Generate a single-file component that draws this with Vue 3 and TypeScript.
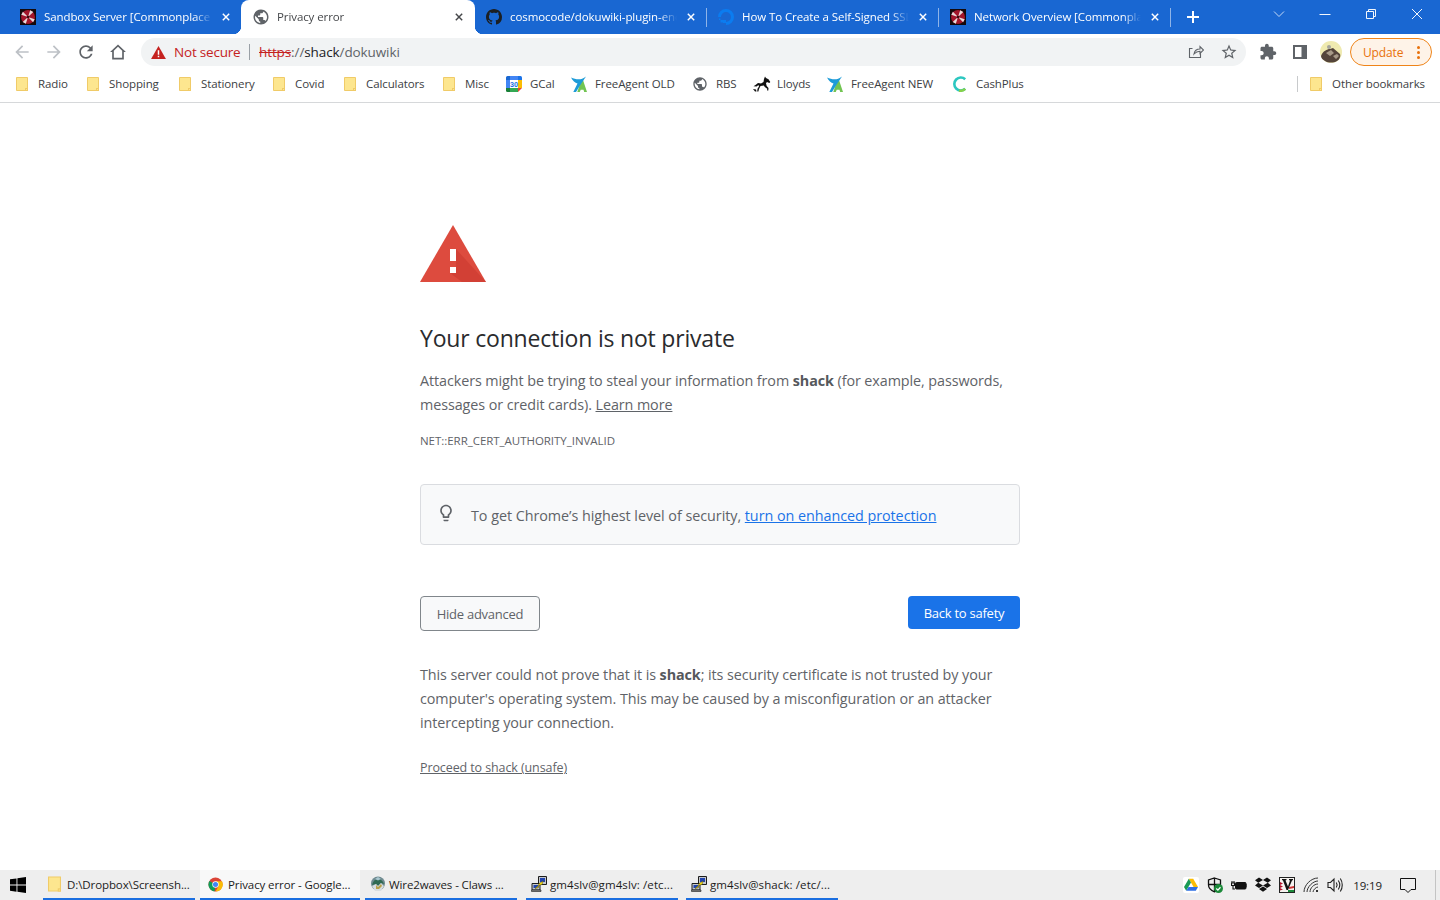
<script setup lang="ts">
interface Tab { title: string; icon: string; cls: string }
interface Mark { label: string; icon: string; width: number }
interface Task { label: string; icon: string; active?: boolean }

const tabs: Tab[] = [
  { title: 'Sandbox Server [Commonplace Books]', icon: 'umbrella', cls: 'first' },
  { title: 'Privacy error', icon: 'globe', cls: 'active' },
  { title: 'cosmocode/dokuwiki-plugin-encrypted', icon: 'github', cls: 'sep' },
  { title: 'How To Create a Self-Signed SSL Certificate', icon: 'ocean', cls: 'sep' },
  { title: 'Network Overview [Commonplace Books]', icon: 'umbrella', cls: 'sep' }
]

const marks: Mark[] = [
  { label: 'Radio', icon: 'folder', width: 71 },
  { label: 'Shopping', icon: 'folder', width: 92 },
  { label: 'Stationery', icon: 'folder', width: 94 },
  { label: 'Covid', icon: 'folder', width: 71 },
  { label: 'Calculators', icon: 'folder', width: 99 },
  { label: 'Misc', icon: 'folder', width: 63 },
  { label: 'GCal', icon: 'gcal', width: 65 },
  { label: 'FreeAgent OLD', icon: 'freeagent', width: 121 },
  { label: 'RBS', icon: 'globe', width: 61 },
  { label: 'Lloyds', icon: 'horse', width: 74 },
  { label: 'FreeAgent NEW', icon: 'freeagent', width: 125 },
  { label: 'CashPlus', icon: 'cash', width: 90 }
]

const tasks: Task[] = [
  { label: 'D:\\Dropbox\\Screensh...', icon: 'folder' },
  { label: 'Privacy error - Google...', icon: 'chrome', active: true },
  { label: 'Wire2waves - Claws ...', icon: 'claws' },
  { label: 'gm4slv@gm4slv: /etc...', icon: 'putty' },
  { label: 'gm4slv@shack: /etc/...', icon: 'putty' }
]
</script>

<template>
  <div class="screen">
    <svg class="defs" width="0" height="0" aria-hidden="true">
      <defs>
        <symbol id="umbrella" viewBox="0 0 16 16">
          <rect width="16" height="16" fill="#14090b" />
          <circle cx="8" cy="8" r="7" fill="#a3162b" />
          <path d="M8 8 10.200 1.300l3.100 1.600zM8 8l6.700 2.200-1.600 3.100zM8 8l-2.200 6.700-3.100-1.600zM8 8 1.300 5.800l1.600-3.100z" fill="#ead9da" />
          <circle cx="8" cy="8" r="1.300" fill="#3a0a10" />
        </symbol>
        <symbol id="folder" viewBox="0 0 12 14">
          <path d="M.5.5h11v13H.5z" fill="#fde68f" stroke="#f0cb68" />
          <path d="M9 11h3v3H9z" fill="#f0cb68" />
          <path d="M10 12h1v1h-1z" fill="#fde68f" />
        </symbol>
        <symbol id="globe" viewBox="0 0 24 24">
          <path fill="#5f6368" d="M12 2C6.480 2 2 6.480 2 12s4.480 10 10 10 10-4.480 10-10S17.520 2 12 2zm-1 17.930c-3.950-.49-7-3.850-7-7.930 0-.62.08-1.210.21-1.790L9 15v1c0 1.100.9 2 2 2v1.930zm6.900-2.540c-.26-.81-1-1.390-1.900-1.390h-1v-3c0-.55-.45-1-1-1H8v-2h2c.55 0 1-.45 1-1V7h2c1.100 0 2-.9 2-2v-.41c2.930 1.190 5 4.060 5 7.410 0 2.080-.8 3.970-2.100 5.390z" />
        </symbol>
        <symbol id="github" viewBox="0 0 16 16">
          <path fill="#1b1f23" d="M8 0C3.580 0 0 3.580 0 8c0 3.540 2.290 6.530 5.470 7.590.4.07.55-.17.55-.38 0-.19-.01-.82-.01-1.490-2.010.37-2.530-.49-2.690-.94-.09-.23-.48-.94-.82-1.130-.28-.15-.68-.52-.01-.53.63-.01 1.080.58 1.230.82.72 1.210 1.870.87 2.330.66.07-.52.28-.87.51-1.070-1.780-.2-3.640-.89-3.640-3.950 0-.87.31-1.590.82-2.150-.08-.2-.36-1.020.08-2.120 0 0 .67-.21 2.200.82.64-.18 1.320-.27 2-.27.68 0 1.360.09 2 .27 1.530-1.040 2.200-.82 2.200-.82.44 1.100.16 1.920.08 2.120.51.56.82 1.270.82 2.150 0 3.070-1.870 3.750-3.650 3.950.29.25.54.73.54 1.480 0 1.070-.01 1.930-.01 2.200 0 .21.15.46.55.38A8.013 8.013 0 0 0 16 8c0-4.420-3.580-8-8-8z" />
        </symbol>
        <symbol id="ocean" viewBox="0 0 16 16">
          <path fill="none" stroke="#0b7cf0" stroke-width="3" d="M8 14.500A6.500 6.500 0 1 0 1.500 8" />
          <path fill="#0b7cf0" d="M5 11h3v3H5zM2.500 11H5v2.500H2.500zM1 9.500h1.500V11H1z" />
        </symbol>
        <symbol id="gcal" viewBox="0 0 16 16">
          <rect width="16" height="16" rx="1.500" fill="#fff" />
          <path d="M0 4V1.500A1.500 1.500 0 0 1 1.500 0H4v4z" fill="#1967d2" />
          <path d="M4 0h8v4H4z" fill="#4285f4" />
          <path d="M12 0h2.500A1.500 1.500 0 0 1 16 1.500V4h-4z" fill="#1a73e8" />
          <path d="M0 4h4v8H0z" fill="#4285f4" />
          <path d="M12 4h4v8h-4z" fill="#fbbc04" />
          <path d="M0 12h4v4H1.500A1.500 1.500 0 0 1 0 14.500z" fill="#188038" />
          <path d="M4 12h8v4H4z" fill="#34a853" />
          <path d="M12 12h4l-4 4z" fill="#ea4335" />
          <text x="8" y="10.800" text-anchor="middle" class="gcal-num">30</text>
        </symbol>
        <symbol id="freeagent" viewBox="0 0 16 16">
          <path d="M8.500 9.500 11.500 2.500 16 16h-2.800l-.7-2.300H9.700L8.800 16H6.300z" fill="#72c452" />
          <path d="M0 1.500C2.500 2.700 5 3.300 7.500 3.300 10 3.300 12.500 2.500 15 .5c-1.800 3-3.500 5.200-5 7.500l-5 8H2.300L6.500 7.500C4 6.800 1.700 4.800 0 1.500z" fill="#1d9bd8" />
        </symbol>
        <symbol id="horse" viewBox="0 0 18 16">
          <path fill="#111" d="M12 .5l1 1.500 2.500 1.300 1.800 2.700-1 1-2.300-1-1 1.300.7 2.700 1.800 2-.2 2.500h-1.200l.1-1.800-2.400-1.700-1-1.500-3.300.6L6 13l-.6 2.500H4.200l.3-2.800L6 10.500l-.5-1.500-2 1.500-3-.3L2.500 9 5 7l3 .5L10.500 6l.5-3z" />
          <path fill="#111" d="M0 13l3 .5.500 2H2z" />
        </symbol>
        <symbol id="cash" viewBox="0 0 16 16">
          <path d="M13.200 3.200A6.500 6.500 0 1 0 13.200 12.800" fill="none" stroke="#2cc7c0" stroke-width="2.600" />
          <path d="M13.200 12.800A6.500 6.500 0 0 1 7 14.500" fill="none" stroke="#86d14a" stroke-width="2.600" />
        </symbol>
        <symbol id="chrome" viewBox="0 0 16 16">
          <circle cx="8" cy="8" r="7.500" fill="#db4437" />
          <path d="M8 8 1.500 4.250A7.500 7.500 0 0 0 7 15.430z" fill="#0f9d58" />
          <path d="M8 4.500h6.930A7.500 7.500 0 0 1 8 15.500L11 10z" fill="#fbbc05" />
          <circle cx="8" cy="8" r="3.400" fill="#fff" />
          <circle cx="8" cy="8" r="2.700" fill="#4285f4" />
        </symbol>
        <symbol id="claws" viewBox="0 0 16 16">
          <circle cx="8" cy="7.500" r="7" fill="#6f8a90" />
          <path d="M2 9c1-4 3-6 6-6s5 2 6 5l-3-1-3 3-2-2z" fill="#2f6a52" />
          <path d="M5 3l3-2 3 2-3 1.500z" fill="#a9c6cf" />
          <path d="M2 10l4-2 2 2 3-3 3 3-3 5H5z" fill="#d8dde0" />
          <path d="M6 9l2 2 3-3 1 2-3 3H6z" fill="#b9a14a" />
        </symbol>
        <symbol id="putty" viewBox="0 0 16 16">
          <path d="M7.500.5h8v8h-8z" fill="#c4c7cc" stroke="#1c1c1c" />
          <path d="M9 2h5v4H9z" fill="#2144b0" />
          <path d="M1 7.500h8v6.500H1z" fill="#c4c7cc" stroke="#1c1c1c" />
          <path d="M2.500 9h5v3h-5z" fill="#2144b0" />
          <path d="M.5 14h9.500v1.500H.5z" fill="#8d8d8d" stroke="#1c1c1c" stroke-width=".6" />
          <path d="M4 12.500 7 10l1.200-2.500 4-2.500-1.200 3.500-3 .8-1 2.500z" fill="#ffe11a" stroke="#5b5200" stroke-width=".5" />
        </symbol>
      </defs>
    </svg>

    <header class="tabstrip">
      <div v-for="tab in tabs" :key="tab.title" class="tab" :class="tab.cls">
        <svg class="favicon" :class="{ small: tab.icon === 'globe' }"><use :href="`#${tab.icon}`" /></svg>
        <span class="tab-title">{{ tab.title }}</span>
        <svg class="tab-close" viewBox="0 0 10 10"><path d="M1 1l8 8M9 1l-8 8" /></svg>
      </div>
      <svg class="new-tab" viewBox="0 0 12 12"><path d="M6 0v12M0 6h12" /></svg>
      <div class="spacer"></div>
      <svg class="win chevron" viewBox="0 0 12 12"><path d="M1 3.500l5 5 5-5" /></svg>
      <svg class="win" viewBox="0 0 12 12"><path d="M.5 6.500h11" /></svg>
      <svg class="win" viewBox="0 0 12 12"><path d="M1.500 3.500h7v7h-7zM3.500 3.500v-2h7v7h-2" /></svg>
      <svg class="win" viewBox="0 0 12 12"><path d="M1 1l10 10M11 1 1 11" /></svg>
    </header>

    <div class="toolbar">
      <svg class="tool dim" viewBox="0 0 24 24"><path d="M20 11H7.830l5.590-5.590L12 4l-8 8 8 8 1.410-1.410L7.830 13H20v-2z" /></svg>
      <svg class="tool dim" viewBox="0 0 24 24"><path d="M12 4l-1.410 1.410L16.170 11H4v2h12.170l-5.580 5.590L12 20l8-8z" /></svg>
      <svg class="tool" viewBox="0 0 24 24"><path d="M17.650 6.350C16.200 4.900 14.210 4 12 4c-4.420 0-7.990 3.580-7.990 8s3.570 8 7.990 8c3.730 0 6.840-2.550 7.730-6h-2.080c-.82 2.330-3.040 4-5.650 4-3.310 0-6-2.690-6-6s2.690-6 6-6c1.660 0 3.140.69 4.220 1.780L13 11h7V4l-2.350 2.350z" /></svg>
      <svg class="tool" viewBox="0 0 24 24"><path d="M12 3 2.500 12H5v9h14v-9h2.500L12 3zm0 2.800 5 4.700V19H7v-8.500l5-4.700z" /></svg>
      <div class="omnibox">
        <svg class="warn" viewBox="0 0 16 14"><path d="M8 0l8 14H0z" fill="#c5221f" /><path d="M7.200 4.500h1.600v5H7.200zM7.200 10.500h1.600V12H7.200z" fill="#fff" /></svg>
        <span class="not-secure">Not secure</span>
        <span class="omni-sep"></span>
        <span class="url"><s class="scheme">https</s><span class="scheme-rest">://</span>shack<span class="scheme-rest">/dokuwiki</span></span>
        <div class="spacer"></div>
        <svg class="omni-icon" viewBox="0 0 16 16"><path d="M12.500 9.500v4h-11v-9h3M6 10c.5-3 3-5 6-5V2.500L15.500 6 12 9.500V7.300C9.500 7.300 7.500 8.300 6 10z" /></svg>
        <svg class="omni-star" viewBox="0 0 24 24"><path d="M22 9.240l-7.190-.62L12 2 9.190 8.630 2 9.240l5.460 4.730L5.820 21 12 17.270 18.180 21l-1.630-7.030L22 9.240zM12 15.400l-3.760 2.270 1-4.280-3.320-2.880 4.380-.38L12 6.100l1.710 4.040 4.380.38-3.320 2.880 1 4.280L12 15.400z" /></svg>
      </div>
      <svg class="puzzle" viewBox="0 0 24 24"><path d="M20.500 11H19V7c0-1.100-.9-2-2-2h-4V3.500C13 2.120 11.880 1 10.500 1S8 2.120 8 3.500V5H4c-1.100 0-1.990.9-1.990 2v3.800H3.500c1.490 0 2.700 1.210 2.700 2.700s-1.210 2.700-2.700 2.700H2V20c0 1.100.9 2 2 2h3.800v-1.500c0-1.490 1.210-2.700 2.700-2.700 1.490 0 2.700 1.210 2.700 2.700V22H17c1.100 0 2-.9 2-2v-4h1.500c1.380 0 2.500-1.120 2.500-2.500S21.880 11 20.500 11z" /></svg>
      <svg class="panel" viewBox="0 0 14 14"><path fill-rule="evenodd" d="M0 0h14v14H0zM2 2v10h6.500V2z" /></svg>
      <svg class="avatar" viewBox="0 0 22 22">
        <circle cx="11" cy="11" r="11" fill="#efeab0" />
        <path d="M1 15c2-5 6-7 9-7l3-1 7 6c1 3-1 6-3 7-3 2-9 2-12 0-2-1-4-3-4-5z" fill="#54443a" />
        <path d="M6 12l5-3 3 3-4 3zM13 15l4-2 2 2-3 3z" fill="#a89a88" />
        <circle cx="9" cy="6" r="2" fill="#a5a59c" />
      </svg>
      <div class="update">
        <span class="update-text">Update</span>
        <span class="dots"><i></i><i></i><i></i></span>
      </div>
    </div>

    <nav class="bookmarks">
      <div v-for="m in marks" :key="m.label" class="mark" :style="{ width: m.width + 'px' }">
        <svg class="mark-icon" :class="m.icon"><use :href="`#${m.icon}`" /></svg>
        <span class="mark-label">{{ m.label }}</span>
      </div>
      <div class="spacer"></div>
      <span class="mark-sep"></span>
      <div class="mark other">
        <svg class="mark-icon folder"><use href="#folder" /></svg>
        <span class="mark-label">Other bookmarks</span>
      </div>
    </nav>

    <main class="page">
      <section class="interstitial">
        <svg class="alert" viewBox="0 0 66 57">
          <path d="M33 0l33 57H0z" fill="#dd4b3e" />
          <path d="M36 24l30 33H42L30 48l6-6z" fill="#c8392d" opacity=".55" />
          <path d="M30 24h6v12h-6zM30 42h6v6h-6z" fill="#fff" />
        </svg>
        <h1>Your connection is not private</h1>
        <p class="lead">Attackers might be trying to steal your information from <strong>shack</strong> (for example, passwords, messages or credit cards). <a class="plain">Learn more</a></p>
        <p class="code">NET::ERR_CERT_AUTHORITY_INVALID</p>
        <div class="promo">
          <svg class="bulb" viewBox="0 0 24 24"><path d="M9 21c0 .55.45 1 1 1h4c.55 0 1-.45 1-1v-1H9v1zm3-19C8.140 2 5 5.140 5 9c0 2.380 1.190 4.470 3 5.740V17c0 .55.45 1 1 1h6c.55 0 1-.45 1-1v-2.260c1.810-1.270 3-3.360 3-5.740 0-3.860-3.140-7-7-7zm2.850 11.100l-.85.6V16h-4v-2.300l-.85-.6C7.800 12.160 7 10.630 7 9c0-2.760 2.240-5 5-5s5 2.240 5 5c0 1.630-.8 3.160-2.150 4.100z" /></svg>
          <span class="promo-text">To get Chrome’s highest level of security, <a class="blue">turn on enhanced protection</a></span>
        </div>
        <div class="actions">
          <button class="btn secondary" type="button">Hide advanced</button>
          <button class="btn primary" type="button">Back to safety</button>
        </div>
        <p class="details">This server could not prove that it is <strong>shack</strong>; its security certificate is not trusted by your computer's operating system. This may be caused by a misconfiguration or an attacker intercepting your connection.</p>
        <p class="proceed"><a class="plain">Proceed to shack (unsafe)</a></p>
      </section>
    </main>

    <footer class="taskbar">
      <svg class="start" viewBox="0 0 16 16"><path d="M0 2.300 6.500 1.400v6.200H0zM7.400 1.300 16 0v7.600H7.400zM0 8.500h6.500v6.200L0 13.800zM7.400 8.500H16V16l-8.600-1.200z" /></svg>
      <div v-for="t in tasks" :key="t.label" class="task" :class="{ current: t.active }">
        <svg class="task-icon" :class="t.icon"><use :href="`#${t.icon}`" /></svg>
        <span>{{ t.label }}</span>
      </div>
      <div class="spacer"></div>
      <div class="tray">
        <svg class="tray-icon" viewBox="0 0 16 16"><rect width="16" height="16" rx="2" fill="#fff" /><path d="M5.800 1.800h4.400L15 10h-4.400z" fill="#fbbc04" /><path d="M5.800 1.800 1 10l2.200 3.800L8 5.600z" fill="#1a9a55" /><path d="M5.500 10H15l-2.200 3.800H3.200z" fill="#2f6fe4" /></svg>
        <svg class="tray-icon" viewBox="0 0 16 16"><path d="M7.500 1 13.500 3v5c0 3.200-2.500 5.500-6 6.800C4 13.500 1.500 11.200 1.500 8V3zM7.500 1v13.800M1.500 7.500h12" fill="none" stroke="#111" stroke-width="1.300" /><circle cx="11.500" cy="11.500" r="4.500" fill="#1c8a3a" /><path d="M9.300 11.500l1.600 1.600 2.600-2.900" fill="none" stroke="#fff" stroke-width="1.300" /></svg>
        <svg class="tray-icon" viewBox="0 0 16 16"><path d="M1 4v2M3 4v2M.5 6h3v2.500h-3zM2 8.500V12h2" fill="none" stroke="#111" stroke-width="1.100" /><rect x="4.500" y="5.500" width="10.500" height="6.500" rx="1" fill="#111" stroke="#111" /><path d="M15.500 7h.5v3h-.5z" fill="#111" /></svg>
        <svg class="tray-icon" viewBox="0 0 16 15"><path fill="#111" d="M4 0 0 2.800l3.200 2.500L8 2.600zM12 0 8 2.600l4.800 2.700L16 2.800zM3.200 5.300 0 8l4 2.600 4-2.700zM12.800 5.300 8 7.900l4 2.700L16 8zM4 11.500l4 2.800 4-2.800-4-2.600z" /></svg>
        <svg class="tray-icon" viewBox="0 0 16 16"><rect x=".5" y=".5" width="15" height="15" fill="#f6f3f0" stroke="#222" /><path d="M3 2h4.500v1L6.500 3.500 9 9.500l2-6-1-.5V2h4v1l-1 .5L9 13H7.500L4 3.500 3 3z" fill="#111" /><path d="M1 5l3 1.500-3 1.500 3 1.500-3 1.500 3 1.500-3 1z" fill="#b3122a" /><path d="M10 10l5-1v2l-5 1z" fill="#c33" /><path d="M9 13h6v2H9z" fill="#1c8a3a" /></svg>
        <svg class="tray-icon" viewBox="0 0 16 16"><path d="M1 15C1 8 8 1 15 1M4 15c0-5 6-11 11-11M7 15c0-4 4-8 8-8M10 15c0-2 3-5 5-5" fill="none" stroke="#333" stroke-width="1" /><path d="M13 13h2v2h-2z" fill="#333" /></svg>
        <svg class="tray-icon" viewBox="0 0 16 16"><path d="M1 5.500h2.500L7 2v12L3.500 10.500H1zM9.300 5.500c1 1.500 1 3.500 0 5M11.300 3.500c1.800 2.700 1.800 6.300 0 9M13.300 1.500c2.600 3.700 2.600 9.300 0 13" fill="none" stroke="#222" stroke-width="1.100" /></svg>
        <span class="clock">19:19</span>
        <svg class="notify" viewBox="0 0 16 16"><path d="M.5 1.500h15v11H11l-3 3-3-3H.5z" fill="none" stroke="#111" /></svg>
        <span class="desk-line"></span>
      </div>
    </footer>
  </div>
</template>

<style scoped>
.screen {
  width: 1440px;
  height: 900px;
  display: flex;
  flex-direction: column;
  overflow: hidden;
  background: #fff;
  font-family: "Open Sans", "Noto Sans", sans-serif;
  color: #202124;
}
.defs { position: absolute; }
.gcal-num { font: 700 7px "Roboto", sans-serif; fill: #1a73e8; }
.spacer { flex: 1; }

/* tab strip */
.tabstrip {
  height: 34px;
  flex: none;
  display: flex;
  align-items: center;
  padding-left: 10px;
  background: #1967d2;
  color: #fff;
  font-size: 11.500px;
  letter-spacing: -.09px;
}
.tab {
  width: 232px;
  height: 34px;
  flex: none;
  box-sizing: border-box;
  display: flex;
  align-items: center;
  padding: 0 11px 0 10px;
  position: relative;
}
.tab.first { width: 231px; padding-right: 9px; }
.tab.active {
  width: 234px;
  padding: 0 10px 0 12px;
  margin-right: 1px;
  background: #fff;
  color: #45474a;
  border-radius: 8px 8px 0 0;
}
.tab.active::before,
.tab.active::after {
  content: "";
  position: absolute;
  bottom: 0;
  width: 8px;
  height: 8px;
}
.tab.active::before { left: -8px; background: radial-gradient(circle at 0 0, transparent 8px, #fff 8.500px); }
.tab.active::after { right: -8px; background: radial-gradient(circle at 100% 0, transparent 8px, #fff 8.500px); }
.tab.sep::after {
  content: "";
  position: absolute;
  right: 1px;
  top: 8px;
  height: 19px;
  width: 1px;
  background: #8fb4e8;
}
.favicon { width: 16px; height: 16px; flex: none; margin-right: 8px; }
.favicon.small { width: 18px; height: 18px; margin: 0 7px 0 -1px; }
.tab-title {
  flex: 1;
  min-width: 0;
  white-space: nowrap;
  overflow: hidden;
  line-height: 18px;
  padding-bottom: 1px;
  -webkit-mask-image: linear-gradient(to right, #000 calc(100% - 18px), transparent);
  mask-image: linear-gradient(to right, #000 calc(100% - 18px), transparent);
}
.tab-close {
  width: 8px;
  height: 8px;
  flex: none;
  margin: 0 2px 0 10px;
  fill: none;
  stroke: #fff;
  stroke-width: 1.800;
}
.tab.active .tab-close { stroke: #45474a; }
.new-tab { width: 12px; height: 12px; margin-left: 15px; fill: none; stroke: #fff; stroke-width: 2; flex: none; }
.win {
  width: 12px;
  height: 12px;
  flex: none;
  align-self: flex-start;
  margin: 8px 34px 0 0;
  fill: none;
  stroke: #fff;
  stroke-width: 1;
  opacity: .95;
}
.win:last-child { margin-right: 17px; }
.chevron { margin-right: 34px; opacity: .75; }

/* toolbar */
.toolbar {
  height: 36px;
  flex: none;
  display: flex;
  align-items: center;
  padding-left: 12px;
}
.tool { width: 20px; height: 20px; fill: #5f6368; margin-right: 12px; flex: none; }
.tool.dim { fill: #bdc1c6; }
.omnibox {
  width: 1105px;
  height: 28px;
  margin-left: 1px;
  flex: none;
  box-sizing: border-box;
  display: flex;
  align-items: center;
  padding: 0 9px 0 10px;
  background: #f1f3f4;
  border-radius: 14px;
  font-size: 13.500px;
  letter-spacing: -.2px;
}
.warn { width: 15px; height: 13px; flex: none; margin-right: 8px; }
.not-secure { color: #c5221f; width: 75px; white-space: nowrap; }
.omni-sep { width: 1px; height: 16px; background: #9aa0a6; margin-right: 9px; }
.url { color: #202124; white-space: nowrap; letter-spacing: -.1px; }
.scheme { color: #c5221f; }
.scheme-rest { color: #5f6368; }
.omni-icon { width: 16px; height: 16px; fill: none; stroke: #5f6368; stroke-width: 1.100; margin-right: 16px; flex: none; }
.omni-star { width: 18px; height: 18px; fill: #5f6368; margin-right: -1px; flex: none; }
.puzzle { width: 18px; height: 18px; fill: #5f6368; margin-left: 13px; flex: none; }
.panel { width: 14px; height: 14px; fill: #5f6368; margin-left: 16px; flex: none; }
.avatar { width: 22px; height: 22px; margin-left: 13px; flex: none; }
.update {
  width: 82px;
  height: 28px;
  margin-left: 8px;
  flex: none;
  box-sizing: border-box;
  display: flex;
  align-items: center;
  justify-content: space-between;
  padding: 0 11px 0 12px;
  border: 1px solid #ef8419;
  border-radius: 14px;
  background: #fef3e8;
  color: #e8710a;
  font-size: 12px;
  letter-spacing: -.15px;
}
.dots { display: flex; flex-direction: column; gap: 2px; }
.dots i { width: 3px; height: 3px; border-radius: 50%; background: #e8710a; display: block; }

/* bookmarks */
.bookmarks {
  height: 33px;
  flex: none;
  box-sizing: border-box;
  display: flex;
  align-items: center;
  padding: 0 0 6px 16px;
  font-size: 11.500px;
  letter-spacing: -.1px;
  color: #3c4043;
  box-shadow: inset 0 -1px 0 #d6d8da;
}
.mark { display: flex; align-items: center; flex: none; white-space: nowrap; }
.mark-label { padding-bottom: 1px; }
.mark-icon { width: 16px; height: 16px; flex: none; margin-right: 8px; }
.mark-icon.folder { width: 12px; height: 14px; margin-right: 10px; }
.mark-icon.horse { width: 18px; height: 16px; margin-right: 6px; }
.mark-sep { width: 1px; height: 16px; background: #c8cacc; margin-right: 12px; }
.other { margin-right: 15px; }

/* page */
.page { flex: 1; min-height: 0; }
.interstitial {
  width: 600px;
  margin: 0 auto;
  padding-top: 122px;
  color: #5f6368;
  font-size: 14.350px;
  line-height: 24px;
}
.alert { display: block; width: 66px; height: 57px; }
h1 {
  margin: 40px 0 0;
  font-size: 23px;
  line-height: 32px;
  font-weight: 400;
  color: #2a2b2e;
  letter-spacing: -.2px;
}
.lead { margin: 15px 0 0; letter-spacing: -.08px; }
.lead strong, .details strong { font-weight: 700; color: #55585c; }
.plain { color: #5f6368; text-decoration: underline; }
.code { margin: 12px 0 0; font-size: 11.500px; letter-spacing: -.04px; line-height: 24px; }
.promo {
  height: 61px;
  margin-top: 31px;
  box-sizing: border-box;
  display: flex;
  align-items: center;
  padding-left: 15px;
  background: #f8f9fa;
  border: 1px solid #dadce0;
  border-radius: 4px;
  letter-spacing: -.04px;
}
.promo-text { padding-top: 2px; }
.bulb { width: 20px; height: 20px; fill: #5f6368; margin-right: 15px; margin-top: -3px; flex: none; }
.blue { color: #1a73e8; text-decoration: underline; }
.actions {
  margin-top: 51px;
  display: flex;
  justify-content: space-between;
  align-items: flex-start;
}
.btn {
  font-family: inherit;
  font-size: 13px;
  letter-spacing: -.25px;
  border-radius: 4px;
  box-sizing: border-box;
  padding: 0;
}
.secondary { width: 120px; height: 35px; background: #f8f9fa; color: #5f6368; border: 1px solid #80868b; }
.primary { width: 112px; height: 33px; background: #1a73e8; color: #fff; border: 0; }
.details { margin: 32px 0 0; letter-spacing: -.08px; }
.proceed { margin: 21px 0 0; font-size: 12.500px; letter-spacing: -.1px; }

/* taskbar */
.taskbar {
  height: 30px;
  flex: none;
  display: flex;
  align-items: stretch;
  background: #eeeeee;
  font-size: 11.500px;
  letter-spacing: -.1px;
  color: #1c1c1c;
}
.start { width: 16px; height: 16px; fill: #000; margin: 7px 17px 0 10px; flex: none; }
.task {
  width: 152px;
  flex: none;
  box-sizing: border-box;
  display: flex;
  align-items: center;
  padding: 0 0 0 5px;
  border-bottom: 2px solid #1a6ee0;
  white-space: nowrap;
  overflow: hidden;
}
.task.current { width: 160px; background: #f8f8f8; padding-left: 8px; }
.task:nth-of-type(n) { margin-left: 5px; }
.task:first-of-type { margin-left: 0; }
.task:nth-of-type(4) { margin-left: 9px; letter-spacing: .1px; }
.task:nth-of-type(5) { margin-left: 8px; letter-spacing: .1px; }
.task-icon { width: 16px; height: 16px; margin-right: 3px; flex: none; }
.task-icon.folder { width: 13px; height: 16px; margin-right: 6px; }
.task-icon.chrome { width: 15px; height: 15px; margin-right: 5px; }
.tray { display: flex; align-items: center; flex: none; position: relative; height: 30px; }
.tray-icon { width: 16px; height: 16px; flex: none; margin-right: 8px; }
.clock { margin: 0 18px 0 2px; font-size: 11.500px; color: #222; }
.notify { width: 16px; height: 16px; margin-right: 19px; }
.desk-line { width: 1px; height: 30px; background: #c4c4c4; margin-right: 4px; }
</style>

<style>
html, body { margin: 0; padding: 0; overflow: hidden; background: #fff; }
</style>
